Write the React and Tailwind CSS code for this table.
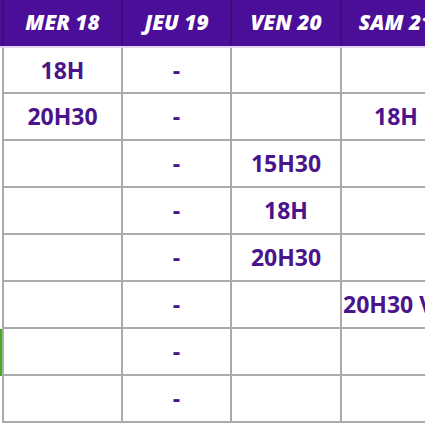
const days = ["MER 18", "JEU 19", "VEN 20", "SAM 21"]

const rows = [
  ["18H", "-", "", ""],
  ["20H30", "-", "", "18H"],
  ["", "-", "15H30", ""],
  ["", "-", "18H", ""],
  ["", "-", "20H30", ""],
  ["", "-", "", "20H30 VOST"],
  ["", "-", "", ""],
  ["", "-", "", ""],
]

const widths = ["w-[121px] border-l-2", "w-[109px]", "w-[110px]", "w-[110px]"]

const App = () => {
  return (
    <div className="w-[425px] h-[425px] overflow-hidden bg-white" style={{ fontFamily: '"Open Sans", "Liberation Sans", sans-serif' }}>
      <div className="flex h-[48px] bg-[#4a0e98] border-b-2 border-[#e3d6f5]">
        <div className="w-[2px] shrink-0" />
        {days.map((d, i) => (
          <div
            key={d}
            className={`${widths[i]} shrink-0 flex items-center justify-center border-r-2 border-[#3b0a7c] text-white italic font-extrabold text-[21px] whitespace-nowrap`}
          >
            {d}
          </div>
        ))}
      </div>
      {rows.map((r, ri) => (
        <div key={ri} className={`flex ${ri === 0 ? "h-[46px]" : "h-[47px]"}`}>
          <div className={`w-[2px] shrink-0 ${ri === 6 ? "bg-[#3fae1f]" : "bg-white"}`} />
          {r.map((c, ci) => (
            <div
              key={ci}
              className={`${widths[ci]} shrink-0 flex items-center border-r-2 border-b-2 border-[#ababab] text-[#4a148c] font-bold text-[23px] whitespace-nowrap ${
                c.length > 6 ? "justify-start pl-[1px]" : "justify-center"
              }`}
            >
              {c}
            </div>
          ))}
        </div>
      ))}
    </div>
  )
}

export default App
